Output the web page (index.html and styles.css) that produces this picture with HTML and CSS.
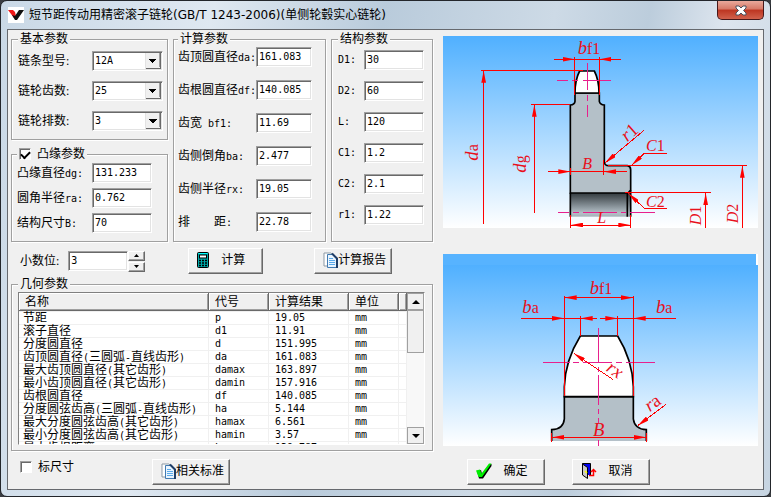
FILE: index.html
```html
<!DOCTYPE html>
<html lang="zh-CN">
<head>
  <meta charset="UTF-8">
  <meta name="viewport" content="width=device-width, initial-scale=1.0">
  <title>短节距传动用精密滚子链轮</title>
  <link rel="stylesheet" href="styles.css">
</head>
<body>
  <div class="window">
    <header class="titlebar">
      <svg class="logo" width="16" height="16" viewBox="0 0 16 16">
        <rect width="16" height="16" fill="#fff"/>
        <path d="M0 3h5l2 2 1 4-2 2z" fill="#f01818"/>
        <path d="M4 8l3 1 4-6h5L9 13H7z" fill="#111"/>
      </svg>
      <h1>短节距传动用精密滚子链轮(GB/T 1243-2006)(单侧轮毂实心链轮)</h1>
      <button class="close" type="button" aria-label="关闭">
        <svg width="12" height="11" viewBox="0 0 12 11">
          <path d="M1 1h3l2 2 2-2h3v2L8.500 5.500 11 8v2H8L6 8l-2 2H1V8l2.500-2.500L1 3z" fill="#fff" stroke="#4a4f5c"/>
        </svg>
      </button>
    </header>

    <form class="client">
      <div class="columns">
        <div class="left">
          <div class="params">
            <div class="stack">
              <fieldset class="basic">
                <legend>基本参数</legend>
                <div class="row"><label for="model">链条型号:</label><select id="model"><option>12A</option></select></div>
                <div class="row"><label for="teeth">链轮齿数:</label><select id="teeth"><option>25</option></select></div>
                <div class="row"><label for="strands">链轮排数:</label><select id="strands"><option>3</option></select></div>
              </fieldset>
              <fieldset class="flange">
                <legend><label class="check"><input type="checkbox" checked>凸缘参数</label></legend>
                <div class="row"><label for="dg">凸缘直径<span class="sym">dg:</span></label><input type="text" id="dg" value="131.233"></div>
                <div class="row"><label for="ra">圆角半径<span class="sym">ra:</span></label><input type="text" id="ra" value="0.762"></div>
                <div class="row"><label for="sb">结构尺寸<span class="sym">B:</span></label><input type="text" id="sb" value="70"></div>
              </fieldset>
            </div>
            <fieldset class="calc">
              <legend>计算参数</legend>
              <div class="row"><label for="da">齿顶圆直径<span class="sym">da:</span></label><input type="text" id="da" value="161.083"></div>
              <div class="row"><label for="df">齿根圆直径<span class="sym">df:</span></label><input type="text" id="df" value="140.085"></div>
              <div class="row"><label for="bf1">齿宽<span class="sym"> bf1:</span></label><input type="text" id="bf1" value="11.69"></div>
              <div class="row"><label for="ba">齿侧倒角<span class="sym">ba:</span></label><input type="text" id="ba" value="2.477"></div>
              <div class="row"><label for="rx">齿侧半径<span class="sym">rx:</span></label><input type="text" id="rx" value="19.05"></div>
              <div class="row"><label for="pt">排　　距<span class="sym">:</span></label><input type="text" id="pt" value="22.78"></div>
            </fieldset>
            <fieldset class="struct">
              <legend>结构参数</legend>
              <div class="row"><label class="sym" for="d1">D1:</label><input type="text" id="d1" value="30"></div>
              <div class="row"><label class="sym" for="d2">D2:</label><input type="text" id="d2" value="60"></div>
              <div class="row"><label class="sym" for="len">L:</label><input type="text" id="len" value="120"></div>
              <div class="row"><label class="sym" for="c1">C1:</label><input type="text" id="c1" value="1.2"></div>
              <div class="row"><label class="sym" for="c2">C2:</label><input type="text" id="c2" value="2.1"></div>
              <div class="row"><label class="sym" for="r1">r1:</label><input type="text" id="r1" value="1.22"></div>
            </fieldset>
          </div>

          <div class="actions">
            <label for="digits">小数位:</label>
            <input type="text" id="digits" value="3">
            <div class="spin">
              <button type="button" aria-label="增加"><svg width="5" height="3" viewBox="0 0 5 3"><path d="M0 3L2.500 0 5 3z"/></svg></button>
              <button type="button" aria-label="减少"><svg width="5" height="3" viewBox="0 0 5 3"><path d="M0 0h5L2.500 3z"/></svg></button>
            </div>
            <button class="btn btn-calc" type="button">
              <svg width="12" height="16" viewBox="0 0 12 16">
                <rect x=".5" y=".5" width="11" height="15" rx="1" fill="#00a8a8" stroke="#000"/>
                <path d="M1.500 1.500h9" stroke="#0ff"/>
                <rect x="2.500" y="3" width="7" height="3" fill="#fff" stroke="#000"/>
                <path d="M2 8.500h8M2 11h8M2 13.500h8" stroke="#000" stroke-width="1.500" stroke-dasharray="2 1"/>
              </svg>
              <span>计算</span>
            </button>
            <button class="btn btn-report" type="button">
              <svg width="15" height="16" viewBox="0 0 15 16"><use href="#docs"/></svg>
              <span>计算报告</span>
            </button>
          </div>

          <fieldset class="geometry">
            <legend>几何参数</legend>
            <div class="list">
              <div class="list-view">
                <table>
                  <colgroup><col class="c-name"><col class="c-code"><col class="c-value"><col class="c-unit"><col></colgroup>
                  <thead>
                    <tr><th>名称</th><th>代号</th><th>计算结果</th><th>单位</th><th></th></tr>
                  </thead>
                  <tbody>
                    <tr><td>节距</td><td>p</td><td>19.05</td><td>mm</td><td></td></tr>
                    <tr><td>滚子直径</td><td>d1</td><td>11.91</td><td>mm</td><td></td></tr>
                    <tr><td>分度圆直径</td><td>d</td><td>151.995</td><td>mm</td><td></td></tr>
                    <tr><td>齿顶圆直径<span class="sym">(</span>三圆弧<span class="sym">-</span>直线齿形<span class="sym">)</span></td><td>da</td><td>161.083</td><td>mm</td><td></td></tr>
                    <tr><td>最大齿顶圆直径<span class="sym">(</span>其它齿形<span class="sym">)</span></td><td>damax</td><td>163.897</td><td>mm</td><td></td></tr>
                    <tr><td>最小齿顶圆直径<span class="sym">(</span>其它齿形<span class="sym">)</span></td><td>damin</td><td>157.916</td><td>mm</td><td></td></tr>
                    <tr><td>齿根圆直径</td><td>df</td><td>140.085</td><td>mm</td><td></td></tr>
                    <tr><td>分度圆弦齿高<span class="sym">(</span>三圆弧<span class="sym">-</span>直线齿形<span class="sym">)</span></td><td>ha</td><td>5.144</td><td>mm</td><td></td></tr>
                    <tr><td>最大分度圆弦齿高<span class="sym">(</span>其它齿形<span class="sym">)</span></td><td>hamax</td><td>6.561</td><td>mm</td><td></td></tr>
                    <tr><td>最小分度圆弦齿高<span class="sym">(</span>其它齿形<span class="sym">)</span></td><td>hamin</td><td>3.57</td><td>mm</td><td></td></tr>
                    <tr><td>最大齿根距离</td><td>Lx</td><td>139.787</td><td>mm</td><td></td></tr>
                  </tbody>
                </table>
              </div>
              <div class="scrollbar">
                <button type="button" aria-label="向上"><svg width="8" height="4" viewBox="0 0 8 4"><path d="M0 4l4-4 4 4z"/></svg></button>
                <div class="thumb"></div>
                <div class="track"></div>
                <button type="button" aria-label="向下"><svg width="8" height="4" viewBox="0 0 8 4"><path d="M0 0h8L4 4z"/></svg></button>
              </div>
            </div>
          </fieldset>
        </div>

        <div class="drawings">
          <!-- 链轮剖面 -->
          <svg viewBox="9 18 945 576" role="img" aria-label="链轮剖面图">
            <defs>
              <linearGradient id="sky" x1="0" y1="0" x2="0" y2="1">
                <stop offset="0" stop-color="#50b0ff"/>
                <stop offset="1" stop-color="#fff"/>
              </linearGradient>
              <linearGradient id="bore" x1="0" y1="0" x2="0" y2="1">
                <stop offset="0" stop-color="#333a3e"/>
                <stop offset=".85" stop-color="#b4c0c8"/>
                <stop offset="1" stop-color="#a4b0b8"/>
              </linearGradient>
              <marker id="arrow" viewBox="0 0 36 14" refX="36" refY="7" markerWidth="36" markerHeight="14" markerUnits="userSpaceOnUse" orient="auto-start-reverse">
                <path d="M0 0l36 7-36 7z" fill="#f00"/>
              </marker>
              <g id="docs">
                <path d="M1 1h7l3 3v10H1z" fill="#fff" stroke="#8d9aa5"/>
                <path d="M4.500 2.500h6l3.500 3.500v9.500H4.500z" fill="#eaf5ff" stroke="#3f78b0"/>
                <path d="M9 1.500L14 6.500V16" fill="none" stroke="#1d3c66" stroke-width="2"/>
                <path d="M6 6.500h4M6 8.500h6M6 10.500h6M6 12.500h6" stroke="#58a9ea"/>
              </g>
            </defs>
            <rect x="9" y="18" width="945" height="576" fill="url(#sky)"/>
            <rect x="391" y="489" width="181" height="71" fill="url(#bore)"/>
            <path class="metal" d="M405 189H478V214Q480 224 493 225V396Q494 407 506 407H562Q572 409 572 419V480L564 489H391V225Q404 224 405 214Z"/>
            <path class="tooth" d="M405 189C405 165 410 140 419 123H463C472 140 477 165 477 189Z"/>
            <path class="edge" d="M391 488V560M562 489V560M572 480V560"/>
            <path class="center" d="M442 99V180M442 195V212M442 224V260M351 152H383M395 152H413M428 152H512M355 547H386M400 547H418M430 547H530M543 547H558M570 547H646"/>
            <path class="dim" d="M404 80V195M478 80V195M404 88H478M122 122H430M274 223H391M391 415V435M491 390V435M391 425H491M505 407H920M555 488H813M391 555V593M572 555V593"/>
            <g class="dim tip">
              <path d="M342 88H404"/><path d="M543 88H478"/>
              <path d="M131 581V122"/><path d="M283 548V224"/>
              <path d="M324 425H391"/><path d="M560 425H492"/>
              <path d="M907 594V407"/><path d="M797 594V489"/>
              <path d="M613 300L495 399"/>
              <path d="M680 370H613L575 406"/><path d="M680 535H613L565 490"/>
            </g>
            <path class="dim tip-both" d="M393 585H571"/>
            <text x="413" y="72" class="t56"><tspan class="i">b</tspan><tspan class="t48">f1</tspan></text>
            <text transform="translate(113 392) rotate(-90)" class="t56"><tspan class="i">d</tspan><tspan class="t48">a</tspan></text>
            <text transform="translate(257 428) rotate(-90)" class="t56"><tspan class="i">d</tspan><tspan class="t48">g</tspan></text>
            <text x="427" y="417" class="t48 i">B</text>
            <text x="472" y="579" class="t48 i">L</text>
            <text transform="translate(562 337) rotate(-42)" class="t56"><tspan class="i">r</tspan>1</text>
            <text x="618" y="364" class="t48"><tspan class="i">C</tspan>1</text>
            <text x="618" y="530" class="t48"><tspan class="i">C</tspan>2</text>
            <text transform="translate(784 586) rotate(-90)" class="t48"><tspan class="i">D</tspan>1</text>
            <text transform="translate(893 580) rotate(-90)" class="t48"><tspan class="i">D</tspan>2</text>
          </svg>

          <!-- 齿形放大 -->
          <svg viewBox="9 27 945 576" role="img" aria-label="齿形放大图">
            <rect x="9" y="27" width="945" height="36" fill="#fff"/>
            <rect x="9" y="27" width="939" height="33" fill="#57b3ff"/>
            <rect x="9" y="60" width="945" height="543" fill="url(#sky)"/>
            <path class="metal plain" d="M373 455H580V522Q584 553 619 554V588H335V554Q370 553 373 522Z"/>
            <path class="edge" d="M335 588V554Q370 553 373 522V455H580V522Q584 553 619 554V588"/>
            <path class="tooth" d="M373 455V425C375 370 395 315 421 273H533C559 315 578 370 580 425V455Z"/>
            <path class="center" d="M475 249V355M475 367V381M475 391V480M475 492V508M475 520V534M475 585V603M309 352H390M400 352H416M430 352H516M528 352H546M558 352H645"/>
            <path class="dim" d="M373 152V452M580 152V452M421 213V272M533 213V272M373 220H421M533 220H580M335 565V590M619 565V590"/>
            <g class="dim tip">
              <path d="M244 220H372"/><path d="M471 220H422"/>
              <path d="M480 220H532"/><path d="M708 220H581"/>
              <path d="M518 403L401 325"/><path d="M677 479L593 542"/>
            </g>
            <path class="dim tip-both" d="M374 158H579"/>
            <path class="dim tip-both" d="M337 577H618"/>
            <text x="449" y="146" class="t56"><tspan class="i">b</tspan><tspan class="t48">f1</tspan></text>
            <text x="247" y="205" class="t56"><tspan class="i">b</tspan><tspan class="t48">a</tspan></text>
            <text x="648" y="205" class="t56"><tspan class="i">b</tspan><tspan class="t48">a</tspan></text>
            <text transform="translate(496 376) rotate(34)" class="t56 i">rx</text>
            <text transform="translate(629 502) rotate(-36)" class="t56"><tspan class="i">r</tspan>a</text>
            <text x="459" y="572" class="t56 i">B</text>
          </svg>
        </div>
      </div>

      <footer class="bottom">
        <label class="check"><input type="checkbox">标尺寸</label>
        <button class="btn btn-standard" type="button">
          <svg width="15" height="16" viewBox="0 0 15 16"><use href="#docs"/></svg>
          <span>相关标准</span>
        </button>
        <button class="btn btn-ok" type="button">
          <svg width="16" height="16" viewBox="0 0 16 16">
            <path d="M1 8l4-1 1 4 8-10h1.500v2L7 15.500H3z" fill="#000"/>
            <path d="M0 7.500L4 6.500l1.500 4L13 .5h2.500L6 14H2.500z" fill="#0e0"/>
          </svg>
          <span>确定</span>
        </button>
        <button class="btn btn-cancel" type="button">
          <svg width="16" height="16" viewBox="0 0 16 16">
            <path d="M1.500 12V.5h8V12" fill="#0000f0" stroke="#000"/>
            <path d="M1.500 1l5 3.500v11L1.500 12z" fill="#c8c8c8" stroke="#000"/>
            <path d="M4 8l2 2" stroke="#ff0" stroke-width="1.500"/>
            <path d="M8 12.500h4.500V6.500M10 9l2.500-2.500L15 9" fill="none" stroke="#f00" stroke-width="1.500"/>
          </svg>
          <span>取消</span>
        </button>
      </footer>
    </form>
  </div>
</body>
</html>
```

FILE: styles.css
```css
* {
  box-sizing: border-box;
}

body {
  margin: 0;
  background: #3a3d42;
  font-family: "Liberation Serif", "Noto Sans CJK SC", sans-serif;
  font-size: 12px;
  line-height: 14px;
  color: #000;
}

.window {
  display: flex;
  flex-direction: column;
  min-height: 100vh;
  padding: 0 6px 6px;
  border: 1px solid #23262b;
  border-radius: 7px;
  background: linear-gradient(100deg, #c9d8e6 0%, #dfe8f1 25%, #b9cbdb 45%, #cddae6 65%, #bccddc 76%, #dde5ee 85%, #c6d4e1 100%);
}

.titlebar {
  display: flex;
  align-items: center;
  gap: 5px;
  height: 28px;
}

h1 {
  flex: 1;
  margin: 0;
  font-family: "DejaVu Sans", "Noto Sans CJK SC", sans-serif;
  font-size: 12px;
  font-weight: normal;
}

.close {
  display: flex;
  align-items: center;
  justify-content: center;
  align-self: flex-start;
  width: 47px;
  height: 19px;
  padding: 0;
  border: 1px solid #47181a;
  border-top: 0;
  border-radius: 0 0 5px 5px;
  background: linear-gradient(#e9a99c 0%, #d67866 45%, #bd3521 50%, #d1614c 100%);
}

.logo {
  margin-left: 1px;
}

.client {
  flex: 1;
  display: flex;
  flex-direction: column;
  margin: 0;
  padding: 2px 5px 3px 3px;
  border: 1px solid #66696e;
  background: #f0f0f0;
}

.columns {
  display: flex;
  gap: 10px;
}

.left {
  flex: 422;
  min-width: 0;
}

.drawings {
  flex: 315;
  display: flex;
  flex-direction: column;
  gap: 26px;
  padding-top: 4px;
}

/* 分组框 */
fieldset {
  min-width: 0;
  margin: 0;
  border: 1px solid #a0a0a0;
  box-shadow: 1px 1px 0 #fff, inset 1px 1px 0 #fff;
}

legend {
  padding: 0 2px;
  background: #f0f0f0;
}

.params {
  display: grid;
  grid-template-columns: 157fr 153fr 102fr;
  gap: 5px;
}

.stack {
  display: flex;
  flex-direction: column;
  gap: 7px;
}

.row {
  display: flex;
  align-items: center;
  justify-content: space-between;
  white-space: pre;
}

.row + .row {
  margin-top: 10px;
}

.basic {
  padding: 5px 4px 8px 6px;
}

.flange {
  padding: 2px 15px 8px 5px;
}

.flange .row + .row {
  margin-top: 5px;
}

.calc {
  padding: 1px 13px 8px 4px;
}

.calc .row + .row {
  margin-top: 13px;
}

.struct {
  padding: 4px 8px 8px 6px;
}

.struct .row + .row {
  margin-top: 11px;
}

.sym,
input,
select,
td + td {
  font-family: "DejaVu Sans Mono", monospace;
  font-size: 10px;
}

.sym {
  line-height: 10px;
}

input[type="text"],
select {
  width: 60px;
  height: 20px;
  padding: 0 2px 2px;
  border: 1px solid;
  border-color: #a0a0a0 #fff #fff #a0a0a0;
  border-radius: 0;
  outline: 0;
  background-color: #fff;
  color: #000;
  box-shadow: inset 1px 1px 0 #696969, inset -1px -1px 0 #e3e3e3;
}

.calc input[type="text"] {
  width: 56px;
}

/* 箭头、按钮右边和下边的阴影、白色文本区 */
select {
  width: 71px;
  appearance: none;
  background-color: #f0f0f0;
  background-image:
    linear-gradient(45deg, transparent 50%, #000 50%),
    linear-gradient(-45deg, transparent 50%, #000 50%),
    linear-gradient(#696969, #696969),
    linear-gradient(#696969, #696969),
    linear-gradient(#a0a0a0, #a0a0a0),
    linear-gradient(#e3e3e3, #e3e3e3),
    linear-gradient(#fff, #fff);
  background-repeat: no-repeat;
  background-size: 4px 4px, 4px 4px, 1px 15px, 15px 1px, 1px 14px, 1px 100%, 53px 100%;
  background-position: 56px 7px, 60px 7px, 67px 1px, 53px 16px, 66px 1px, 52px 0, 0 0;
}

.check {
  display: flex;
  align-items: center;
  gap: 6px;
}

input[type="checkbox"] {
  appearance: none;
  display: grid;
  place-items: center;
  width: 12px;
  height: 12px;
  margin: 0;
  border: 1px solid;
  border-color: #a0a0a0 #fff #fff #a0a0a0;
  background: #fff;
  box-shadow: inset 1px 1px 0 #696969;
}

input[type="checkbox"]:checked::before {
  content: "";
  width: 7px;
  height: 4px;
  border: 2px solid #000;
  border-top: 0;
  border-right: 0;
  transform: rotate(-45deg);
}

/* 按钮 */
.btn,
.spin button {
  border: 1px solid;
  border-color: #fff #696969 #696969 #fff;
  border-radius: 0;
  background: #f0f0f0;
  box-shadow: inset -1px -1px 0 #a0a0a0;
}

.btn {
  display: flex;
  align-items: center;
  width: 78px;
  height: 26px;
  padding: 0 5px 2px 8px;
  font: inherit;
  white-space: nowrap;
}

.btn span {
  flex: 1;
  text-align: center;
}

.actions {
  display: flex;
  align-items: center;
  margin: 6px 0 3px;
  padding-left: 9px;
}

.actions input {
  margin-left: 9px;
}

.spin {
  display: grid;
  gap: 1px;
}

.spin button {
  display: grid;
  place-items: center;
  width: 17px;
  height: 10px;
  padding: 0;
}

.btn-calc {
  width: 75px;
  margin-left: 43px;
}

.btn-report {
  margin-left: 51px;
}

/* 结果列表 */
.geometry {
  padding: 1px 7px 5px 6px;
}

.list {
  display: flex;
  height: 153px;
  border: 1px solid;
  border-color: #808080 #fff #fff #808080;
  background: #fff;
}

.list-view {
  flex: 1;
  overflow: hidden;
}

table {
  width: 100%;
  table-layout: fixed;
  border-collapse: separate;
  border-spacing: 0;
}

.c-name {
  width: 190px;
}

.c-code {
  width: 60px;
}

.c-value {
  width: 80px;
}

.c-unit {
  width: 50px;
}

th,
td {
  text-align: left;
  white-space: nowrap;
}

th {
  height: 18px;
  padding: 0 6px;
  border-right: 1px solid #696969;
  border-bottom: 1px solid #696969;
  background: #f0f0f0;
  box-shadow: inset 1px 1px 0 #fff, inset -1px -1px 0 #a0a0a0;
  font-weight: normal;
}

td {
  height: 13px;
  padding: 0 4px;
  border-top: 1px solid #f0f0f0;
  border-right: 1px solid #f0f0f0;
  line-height: 12px;
}

td + td {
  padding-left: 6px;
}

.scrollbar {
  display: flex;
  flex-direction: column;
  width: 17px;
}

.scrollbar button,
.thumb {
  border: 1px solid #a0a0a0;
  border-radius: 0;
  background: #f0f0f0;
}

.scrollbar button {
  display: grid;
  place-items: center;
  height: 17px;
  padding: 0;
}

.thumb {
  height: 43px;
}

.track {
  flex: 1;
  background: #f8f8f8;
}

/* 图形 */
.drawings svg {
  display: block;
  width: 100%;
}

.drawings text {
  font-family: "Liberation Serif", serif;
  fill: #e8101c;
}

.i {
  font-style: italic;
}

.t48 {
  font-size: 48px;
}

.t56 {
  font-size: 56px;
}

.metal,
.tooth,
.edge {
  stroke: #000;
  stroke-width: 5;
}

.metal {
  fill: #b4c0c8;
}

.plain {
  stroke: none;
}

.tooth {
  fill: #fff;
}

.edge,
.dim,
.center {
  fill: none;
}

.dim,
.center {
  shape-rendering: crispEdges;
}

.dim {
  stroke: #f00;
  stroke-width: 3;
}

.center {
  stroke: #e8208c;
  stroke-width: 3;
}

.tip path {
  marker-end: url(#arrow);
}

.tip-both {
  marker-start: url(#arrow);
  marker-end: url(#arrow);
}

.bottom {
  display: flex;
  align-items: flex-start;
  padding: 8px 0 0 9px;
}

.bottom .check {
  padding-top: 1px;
}

.btn-standard {
  margin-left: 78px;
}

.btn-ok {
  margin-left: auto;
}

.btn-cancel {
  margin: 0 108px 0 27px;
}
```
